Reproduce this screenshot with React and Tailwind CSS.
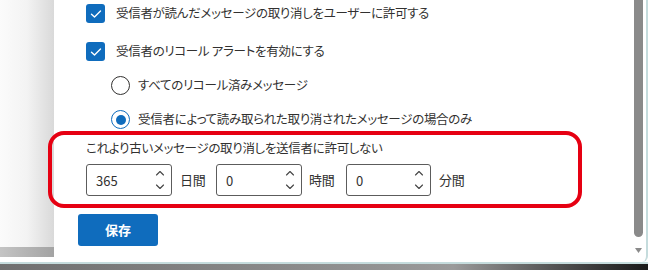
import React from "react";

const font = {
  fontFamily: '"Noto Sans CJK JP", "Noto Sans", sans-serif',
};

function Checkbox() {
  return (
    <div className="w-[19px] h-[19px] rounded-[3px] bg-[#0f6cbd] flex items-center justify-center shrink-0">
      <svg width="12" height="10" viewBox="0 0 12 10" fill="none">
        <path d="M1.5 5.2 L4.5 8 L10.5 2" stroke="white" strokeWidth="1.4" strokeLinecap="round" strokeLinejoin="round" />
      </svg>
    </div>
  );
}

function Radio({ checked }) {
  return checked ? (
    <div className="w-[19px] h-[19px] rounded-full border-[1.5px] border-[#0f6cbd] flex items-center justify-center shrink-0">
      <div className="w-[10px] h-[10px] rounded-full bg-[#0f6cbd]" />
    </div>
  ) : (
    <div className="w-[19px] h-[19px] rounded-full border-[1.5px] border-[#323130] shrink-0" />
  );
}

function Spin({ value, w }) {
  return (
    <div className={`h-[32px] ${w} border border-[#5c5c5c] rounded-[3px] flex items-center justify-between pl-[9px] pr-[6px] bg-white`}>
      <span className="text-[13px] text-[#323130] mt-[2px] tracking-normal">{value}</span>
      <svg width="10" height="22" viewBox="0 0 10 22" fill="none">
        <path d="M1.5 6 L5 2.5 L8.5 6" stroke="#444" strokeWidth="1.1" strokeLinecap="round" strokeLinejoin="round" />
        <path d="M1.5 16 L5 19.5 L8.5 16" stroke="#444" strokeWidth="1.1" strokeLinecap="round" strokeLinejoin="round" />
      </svg>
    </div>
  );
}

export default function App() {
  return (
    <div
      className="relative w-[648px] h-[270px] overflow-hidden bg-white [font-feature-settings:'palt']"
      style={font}
    >
      <div className="flex flex-col h-full">
        <div className="flex h-[262px]">
          {/* left shadow region */}
          <div className="w-[54px] flex flex-col bg-gradient-to-r from-[#fbfbfb] via-[#f3f3f3] to-[#d9d9d9]">
            <div className="flex-1" />
            <div className="h-[10px] bg-gradient-to-r from-[#c4c4c4] to-[#a3a3a3]" />
            <div className="h-[5px] bg-white" />
          </div>
          {/* panel */}
          <div className="flex-1 flex bg-white border-r-2 border-[#c5dcdd] rounded-br-[6px]">
            <div className="flex-1 flex flex-col pl-[32px] text-[12.5px] tracking-[-0.3px] text-[#323130]">
              <div className="mt-[4px] h-[19px] flex items-center gap-[11px]">
                <Checkbox />
                <span>受信者が読んだメッセージの取り消しをユーザーに許可する</span>
              </div>
              <div className="mt-[19px] h-[19px] flex items-center gap-[11px]">
                <Checkbox />
                <span>受信者のリコール アラートを有効にする</span>
              </div>
              <div className="mt-[15px] h-[19px] flex items-center gap-[8px] pl-[25px]">
                <Radio />
                <span>すべてのリコール済みメッセージ</span>
              </div>
              <div className="mt-[15px] h-[19px] flex items-center gap-[8px] pl-[25px]">
                <Radio checked />
                <span>受信者によって読み取られた取り消されたメッセージの場合のみ</span>
              </div>
              <div className="mt-[10px] h-[18px] flex items-center">
                <span>これより古いメッセージの取り消しを送信者に許可しない</span>
              </div>
              <div className="mt-[7px] flex items-center">
                <Spin value="365" w="w-[86px]" />
                <span className="ml-[8px] w-[36px] text-[13px]">日間</span>
                <Spin value="0" w="w-[86px]" />
                <span className="ml-[7px] w-[37px] text-[13px]">時間</span>
                <Spin value="0" w="w-[85px]" />
                <span className="ml-[8px] text-[13px]">分間</span>
              </div>
              <div className="mt-[18px]">
                <button className="-ml-[8px] w-[80px] h-[32px] rounded-[3px] bg-[#0f6cbd] text-white font-bold text-[13px] tracking-normal">
                  保存
                </button>
              </div>
            </div>
            {/* scrollbar */}
            <div className="w-[9px] mr-[3px] flex flex-col items-center">
              <div className="w-[9px] h-[237px] bg-[#8a8a8a] rounded-b-full" />
              <svg className="mt-[11px]" width="7" height="5" viewBox="0 0 7 5">
                <path d="M0 0 H7 L3.5 5 Z" fill="#8a8a8a" />
              </svg>
            </div>
          </div>
        </div>
        <div className="h-[2px] bg-[#c5dcdd]" />
        <div className="flex-1 bg-gradient-to-r from-[#6f6f6f] via-[#9a9a9a] via-70% to-[#1a1a1a]" />
      </div>
      {/* red annotation box */}
      <div className="absolute left-[48px] top-[131px] w-[534px] h-[77px] border-[4px] border-[#e60012] rounded-[16px]" />
    </div>
  );
}
